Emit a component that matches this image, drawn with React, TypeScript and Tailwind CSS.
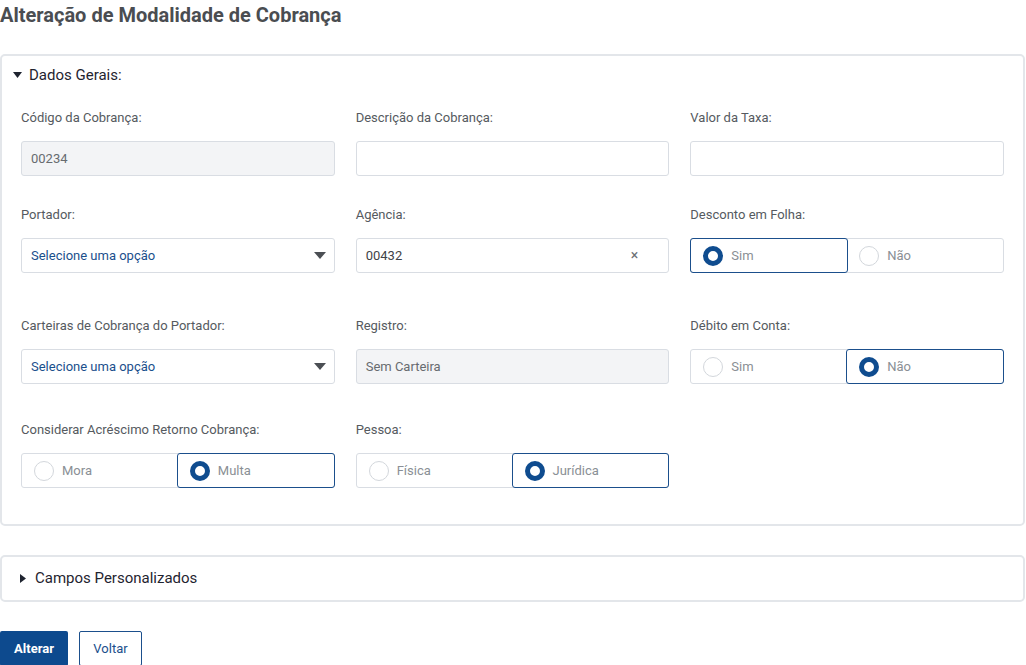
import React from "react";

const font = { fontFamily: "Roboto, 'Liberation Sans', sans-serif" };

function Label({ children }: { children: React.ReactNode }) {
  return <div className="text-[13px] text-[#555a60] leading-4 mb-[15px]">{children}</div>;
}

function TextBox({ value, disabled }: { value?: string; disabled?: boolean }) {
  return (
    <div
      className={
        disabled
          ? "h-[35px] border border-[#d9dde3] rounded-[3px] bg-[#f3f4f6] flex items-center px-[9px] text-[13px] text-[#676b70]"
          : "h-[35px] border border-[#d9dde3] rounded-[3px] bg-white flex items-center px-[9px] text-[13px] text-[#3f4347]"
      }
    >
      {value}
    </div>
  );
}

function Select() {
  return (
    <div className="h-[35px] border border-[#d9dde3] rounded-[3px] bg-white flex items-center justify-between pl-[9px] pr-[8px] text-[13px] text-[#1b4f8c]">
      <span>Selecione uma opção</span>
      <svg width="12" height="7" viewBox="0 0 12 7">
        <path d="M0 0h12L6 7z" fill="#4b4f54" />
      </svg>
    </div>
  );
}

function Radio({ checked, label }: { checked: boolean; label: string }) {
  return (
    <div
      className={
        checked
          ? "flex-1 flex items-center gap-[8px] pl-[12px] border border-[#1b4f8c] rounded-[3px] -m-px relative z-10"
          : "flex-1 flex items-center gap-[8px] pl-[12px]"
      }
    >
      {checked ? (
        <span className="shrink-0 w-[20px] h-[20px] rounded-full border-[5px] border-[#0f4c8f] bg-white" />
      ) : (
        <span className="shrink-0 w-[20px] h-[20px] rounded-full border border-[#d3d7dc] bg-white" />
      )}
      <span className="text-[13px] text-[#8a8f95]">{label}</span>
    </div>
  );
}

function RadioGroup({ options, selected }: { options: string[]; selected: number }) {
  return (
    <div className="h-[35px] border border-[#d9dde3] rounded-[3px] flex">
      {options.map((o, i) => (
        <Radio key={o} label={o} checked={i === selected} />
      ))}
    </div>
  );
}

function Caret({ open }: { open: boolean }) {
  return open ? (
    <svg width="9" height="6" viewBox="0 0 9 6">
      <path d="M0 0h9L4.5 6z" fill="#1f2430" />
    </svg>
  ) : (
    <svg width="6" height="9" viewBox="0 0 6 9">
      <path d="M0 0v9l6-4.5z" fill="#1f2430" />
    </svg>
  );
}

export default function App() {
  return (
    <div className="bg-white w-[1026px] h-[665px] overflow-hidden" style={font}>
      <h1 className="text-[20px] font-bold text-[#4a4d51] leading-6 pt-[3px]">
        Alteração de Modalidade de Cobrança
      </h1>

      <div className="mt-[27px] mr-px border-2 border-[#e3e6ea] rounded-[5px] px-[19px] pt-[9px] pb-[36px]">
        <div className="flex items-center gap-[7px] -ml-[8px] h-[20px] text-[15px] text-[#1f2430]">
          <Caret open />
          <span>Dados Gerais:</span>
        </div>

        <div className="grid grid-cols-3 gap-x-[21px] mt-[25px]">
          <div>
            <Label>Código da Cobrança:</Label>
            <TextBox value="00234" disabled />
          </div>
          <div>
            <Label>Descrição da Cobrança:</Label>
            <TextBox />
          </div>
          <div>
            <Label>Valor da Taxa:</Label>
            <TextBox />
          </div>
        </div>

        <div className="grid grid-cols-3 gap-x-[21px] mt-[31px]">
          <div>
            <Label>Portador:</Label>
            <Select />
          </div>
          <div>
            <Label>Agência:</Label>
            <div className="h-[35px] border border-[#d9dde3] rounded-[3px] bg-white flex items-center justify-between pl-[9px] pr-[30px] text-[13px] text-[#3f4347]">
              <span>00432</span>
              <span className="text-[#6b6f74] text-[14px]">×</span>
            </div>
          </div>
          <div>
            <Label>Desconto em Folha:</Label>
            <RadioGroup options={["Sim", "Não"]} selected={0} />
          </div>
        </div>

        <div className="grid grid-cols-3 gap-x-[21px] mt-[45px]">
          <div>
            <Label>Carteiras de Cobrança do Portador:</Label>
            <Select />
          </div>
          <div>
            <Label>Registro:</Label>
            <TextBox value="Sem Carteira" disabled />
          </div>
          <div>
            <Label>Débito em Conta:</Label>
            <RadioGroup options={["Sim", "Não"]} selected={1} />
          </div>
        </div>

        <div className="grid grid-cols-3 gap-x-[21px] mt-[38px]">
          <div>
            <Label>Considerar Acréscimo Retorno Cobrança:</Label>
            <RadioGroup options={["Mora", "Multa"]} selected={1} />
          </div>
          <div>
            <Label>Pessoa:</Label>
            <RadioGroup options={["Física", "Jurídica"]} selected={1} />
          </div>
        </div>
      </div>

      <div className="mt-[29px] mr-px border-2 border-[#e3e6ea] rounded-[5px] h-[47px] flex items-center gap-[9px] pl-[18px] text-[15px] text-[#1f2430]">
        <Caret open={false} />
        <span>Campos Personalizados</span>
      </div>

      <div className="flex gap-[11px] mt-[29px]">
        <button className="h-[35px] w-[68px] bg-[#0d4a8e] text-white text-[13px] font-bold rounded-[2px]">
          Alterar
        </button>
        <button className="h-[35px] w-[63px] border border-[#1b4f8c] text-[#1b4f8c] text-[13px] rounded-[2px] bg-white">
          Voltar
        </button>
      </div>
    </div>
  );
}
